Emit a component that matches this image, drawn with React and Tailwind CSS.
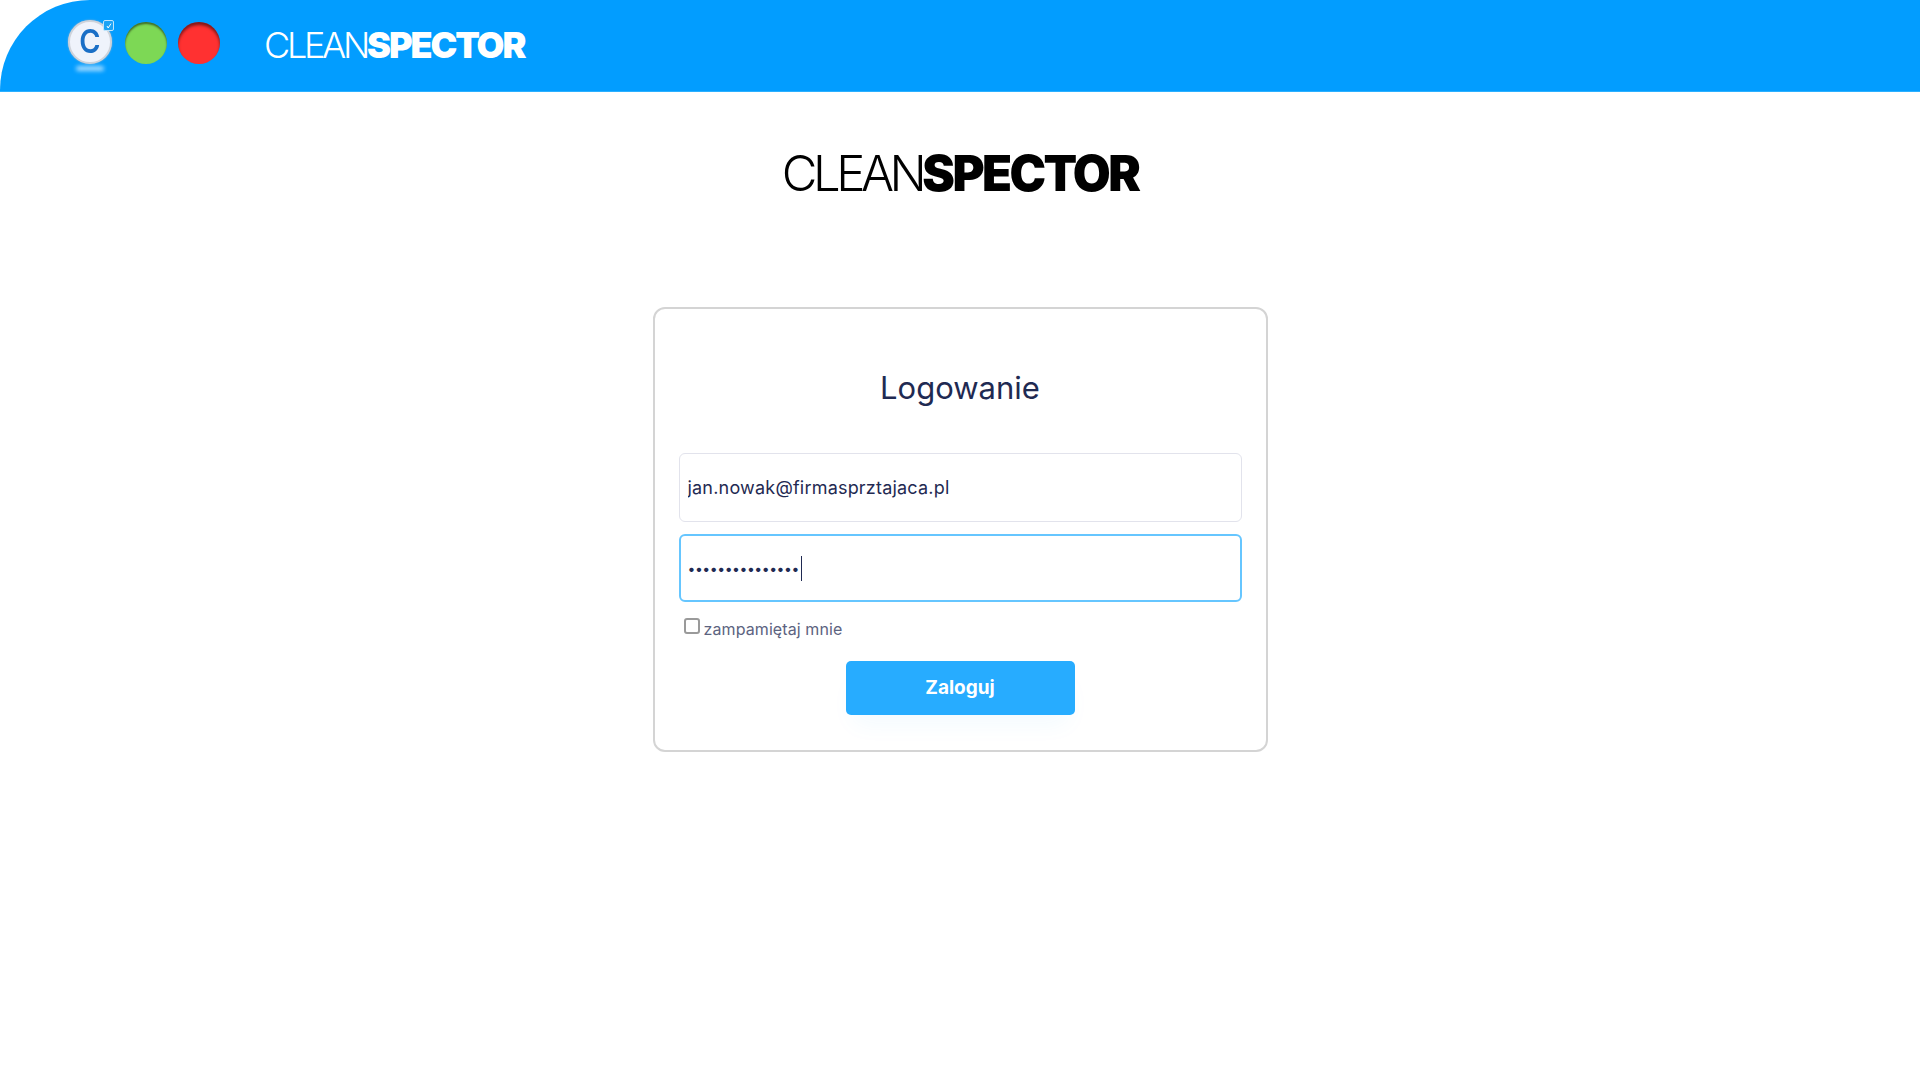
import React from "react";

function Wordmark({ className, lightClass, boldClass }) {
  return (
    <div className={className} style={{ fontFamily: "Inter, sans-serif" }}>
      <span className={lightClass}>CLEAN</span>
      <span className={boldClass}>SPECTOR</span>
    </div>
  );
}

function AppLogo() {
  return (
    <div className="relative w-[46px] h-[46px]">
      <div className="w-[44px] h-[44px] ml-[1px] rounded-full bg-[#eff3fb] border-2 border-[#cfd3da] flex items-center justify-center shadow-[0_0_2px_#9fb4c8]">
        <span className="text-[32px] leading-none font-semibold text-[#1a6fc6] inline-block scale-x-90" style={{ fontFamily: "Inter, sans-serif" }}>
          C
        </span>
      </div>
      <div className="absolute top-0 right-[-1px] w-[11px] h-[11px] rounded-[2px] bg-[#1ba3f5] border border-[#bfe4fb] flex items-center justify-center">
        <svg viewBox="0 0 10 10" className="w-[8px] h-[8px]">
          <path d="M2.5 5l1.5 2.5L7.5 2" fill="none" stroke="#ffffff" strokeWidth="1.2" />
        </svg>
      </div>
      <div className="absolute left-[9px] top-[46px] w-[28px] h-[5px] rounded-full bg-[#a6dcff] blur-[2px]" />
    </div>
  );
}

export default function App() {
  return (
    <div className="min-h-screen bg-white text-[#1f2a52]" style={{ fontFamily: "Inter, sans-serif" }}>
      <header className="h-[92px] bg-[#029dff] border-b border-[#2bb0ff] rounded-tl-[90px] flex items-center pl-[67px] pb-[5px]">
        <AppLogo />
        <div className="w-[42px] h-[42px] ml-[12px] rounded-full bg-[#7dd855] shadow-[inset_0_2px_2px_rgba(0,0,0,0.5)]" />
        <div className="w-[42px] h-[42px] ml-[11px] rounded-full bg-[#ff3131] shadow-[inset_0_3px_3px_rgba(0,0,0,0.5)]" />
        <Wordmark
          className="ml-[44px] mt-[4px] text-[36px] leading-none text-white"
          lightClass="font-light tracking-[-3.3px]"
          boldClass="font-black tracking-[-2.1px]"
        />
      </header>

      <main className="flex flex-col items-center">
        <Wordmark
          className="mt-[57px] text-[49px] leading-none text-black"
          lightClass="font-light tracking-[-4.4px]"
          boldClass="font-black tracking-[-2.6px]"
        />

        <div className="mt-[109px] w-[615px] h-[445px] border-2 border-[#d4d4d4] rounded-[12px] px-[24px] flex flex-col">
          <h1 className="mt-[56px] text-center text-[31px] leading-[45px] font-normal">Logowanie</h1>

          <input
            type="text"
            readOnly
            value="jan.nowak@firmasprztajaca.pl"
            className="mt-[43px] h-[69px] w-full rounded-[6px] border border-[#e2e3ec] px-[8px] text-[18px] tracking-[0.2px] text-[#1f2a52] outline-none"
          />

          <div className="relative mt-[12px]">
            <input
              type="password"
              readOnly
              value="jan.nowak123456"
              className="h-[68px] w-full rounded-[6px] border-2 border-[#66c6ff] px-[7px] text-[14px] tracking-[-0.45px] text-[#1f2a52] outline-none"
            />
            <div className="absolute left-[122px] top-[22px] w-[1px] h-[25px] bg-[#1f2a52]" />
          </div>

          <label className="mt-[15px] pl-[5px] flex items-start gap-[4px]">
            <input type="checkbox" className="w-[16px] h-[16px] mt-[1px] appearance-none rounded-[3px] border-2 border-[#9a9a9a] bg-white" />
            <span className="mt-[2px] text-[16px] tracking-[0.1px] leading-[20px] text-[#5c6380]">zampamiętaj mnie</span>
          </label>

          <button className="mt-[22px] self-center w-[229px] h-[54px] rounded-[5px] bg-[#27acff] text-white text-[19px] font-bold shadow-[0_16px_24px_-8px_rgba(39,172,255,0.06)]">
            Zaloguj
          </button>
        </div>
      </main>
    </div>
  );
}
